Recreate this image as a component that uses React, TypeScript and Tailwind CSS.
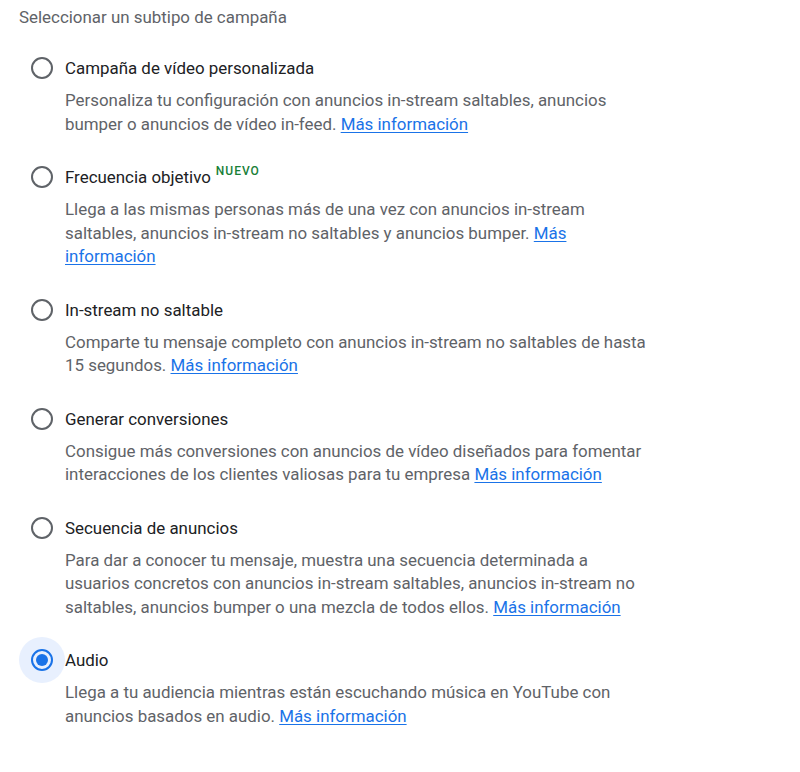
import React from "react";

type Option = {
  label: string;
  badge?: string;
  desc: string;
  selected?: boolean;
};

const options: Option[] = [
  {
    label: "Campaña de vídeo personalizada",
    desc: "Personaliza tu configuración con anuncios in-stream saltables, anuncios bumper o anuncios de vídeo in-feed.",
  },
  {
    label: "Frecuencia objetivo",
    badge: "NUEVO",
    desc: "Llega a las mismas personas más de una vez con anuncios in-stream saltables, anuncios in-stream no saltables y anuncios bumper.",
  },
  {
    label: "In-stream no saltable",
    desc: "Comparte tu mensaje completo con anuncios in-stream no saltables de hasta 15 segundos.",
  },
  {
    label: "Generar conversiones",
    desc: "Consigue más conversiones con anuncios de vídeo diseñados para fomentar interacciones de los clientes valiosas para tu empresa",
  },
  {
    label: "Secuencia de anuncios",
    desc: "Para dar a conocer tu mensaje, muestra una secuencia determinada a usuarios concretos con anuncios in-stream saltables, anuncios in-stream no saltables, anuncios bumper o una mezcla de todos ellos.",
  },
  {
    label: "Audio",
    desc: "Llega a tu audiencia mientras están escuchando música en YouTube con anuncios basados en audio.",
    selected: true,
  },
];

function Radio({ selected }: { selected?: boolean }) {
  return (
    <div className="relative flex h-6 w-[46px] shrink-0 items-center justify-center">
      {selected && (
        <span className="absolute left-0 top-1/2 h-[46px] w-[46px] -translate-y-1/2 rounded-full bg-[#e8f0fe]" />
      )}
      <span
        className={
          selected
            ? "relative flex h-[22px] w-[22px] items-center justify-center rounded-full border-2 border-[#1a73e8]"
            : "relative flex h-[22px] w-[22px] items-center justify-center rounded-full border-2 border-[#5f6368]"
        }
      >
        {selected && <span className="h-3 w-3 rounded-full bg-[#1a73e8]" />}
      </span>
    </div>
  );
}

export default function App() {
  return (
    <div
      className="min-h-[772px] bg-white pl-[19px] pt-[5px] text-[16.9px]"
      style={{ fontFamily: "Roboto, 'Noto Sans', sans-serif" }}
    >
      <div className="leading-6 text-[#5f6368]">Seleccionar un subtipo de campaña</div>

      <div className="mt-[27px] flex flex-col gap-[29px]">
        {options.map((o) => (
          <div key={o.label}>
            <div className="flex items-center">
              <Radio selected={o.selected} />
              <span className="leading-6 text-[#202124]">{o.label}</span>
              {o.badge && (
                <span className="ml-[5px] -translate-y-[6px] text-[12px] font-medium leading-none tracking-[0.08em] text-[#188038]">
                  {o.badge}
                </span>
              )}
            </div>
            <p className="ml-[46px] mt-[9px] max-w-[585px] leading-[23.5px] text-[#5f6368]">
              {o.desc}{" "}
              <a href="#" className="text-[#1a73e8] underline underline-offset-2">
                Más información
              </a>
            </p>
          </div>
        ))}
      </div>
    </div>
  );
}
